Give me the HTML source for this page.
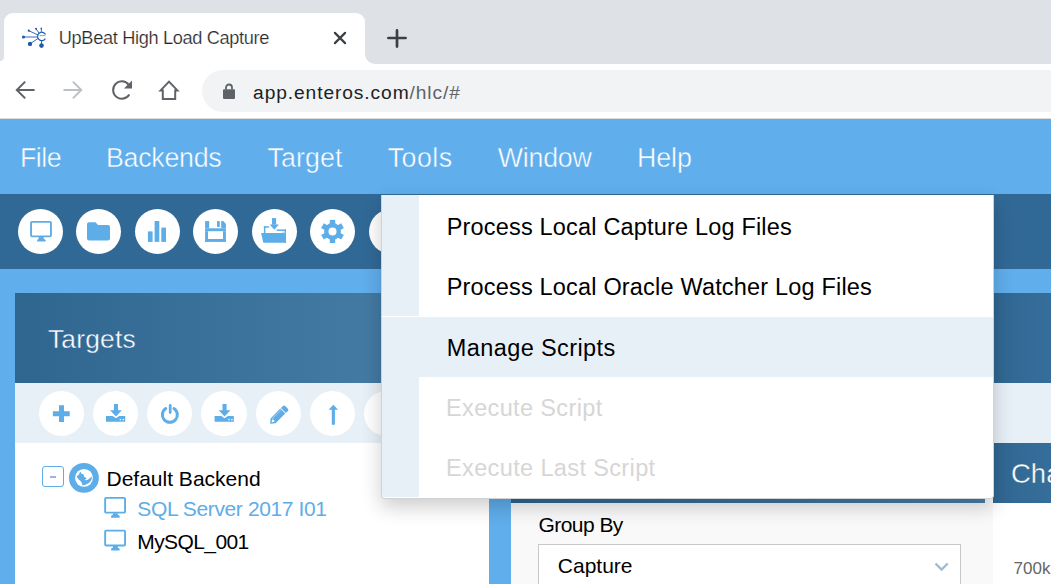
<!DOCTYPE html>
<html><head><meta charset="utf-8">
<style>
*{margin:0;padding:0;box-sizing:border-box}
html,body{width:1051px;height:584px;overflow:hidden;background:#60aeec;font-family:"Liberation Sans",sans-serif}
.a{position:absolute}
.t{position:absolute;line-height:1;white-space:nowrap}
.cb{width:45.3px;height:45.3px;border-radius:50%;background:#fff}
.cw{width:45.6px;height:45.6px;border-radius:50%;background:#fff}
</style></head><body>
<!-- tab strip -->
<div class="a" style="left:0;top:0;width:1051px;height:64px;background:#dee1e6"></div>
<div class="a" style="left:0;top:54px;width:1051px;height:10px;background:#fff"></div>
<div class="a" style="left:0;top:0;width:4px;height:61px;background:#dee1e6;border-bottom-right-radius:5px"></div>
<div class="a" style="left:365px;top:0;width:686px;height:64px;background:#dee1e6;border-bottom-left-radius:10px"></div>
<div class="a" style="left:4px;top:13px;width:361px;height:51px;background:#fff;border-radius:9px 9px 0 0"></div>
<!-- favicon -->
<svg class="a" style="left:18px;top:24px" width="32" height="28" viewBox="18 24 32 28">
<g stroke="#1f5aae" stroke-width="0.9" fill="none">
<line x1="23.5" y1="37" x2="38" y2="37"/>
<line x1="28.8" y1="30.7" x2="38" y2="35"/>
<line x1="36" y1="28.8" x2="39" y2="33"/>
<line x1="41.3" y1="28.4" x2="41.3" y2="32"/>
<line x1="30" y1="43.9" x2="38" y2="38.5"/>
<line x1="41.5" y1="45.6" x2="41.5" y2="40"/>
<path d="M45.6 34.6 A4.2 4.2 0 1 0 45.4 38.6" stroke-width="1.15"/>
<line x1="39.5" y1="35.6" x2="45.3" y2="35.6" stroke-width="0.9" opacity="0.6"/>
</g>
<g fill="#1f5aae">
<circle cx="23.5" cy="37" r="1.6"/><circle cx="28.8" cy="30.7" r="1.1"/><circle cx="36" cy="28.8" r="1"/><circle cx="41.3" cy="28.4" r="0.8"/>
<circle cx="30" cy="43.9" r="2.2"/><circle cx="41.5" cy="45.6" r="2.3"/>
</g>
</svg>
<div class="t" style="left:58.8px;top:28.5px;font-size:18.2px;letter-spacing:-0.34px;color:#26282b;-webkit-text-stroke:0.22px #fff">UpBeat High Load Capture</div>
<svg class="a" style="left:330px;top:28px" width="20" height="20" viewBox="0 0 20 20"><path d="M4.9 4.9L15.1 15.1M15.1 4.9L4.9 15.1" stroke="#3c4043" stroke-width="2.2" stroke-linecap="round"/></svg>
<svg class="a" style="left:386px;top:27px" width="22" height="22" viewBox="0 0 22 22"><path d="M11 3.4V19.6M2.4 11H19.6" stroke="#3c4043" stroke-width="2.7" stroke-linecap="round"/></svg>

<!-- toolbar -->
<div class="a" style="left:0;top:64px;width:1051px;height:55px;background:#fff"></div>
<div class="a" style="left:0;top:118px;width:1051px;height:1px;background:#e2dcdc"></div>
<svg class="a" style="left:10px;top:75px" width="30" height="30" viewBox="0 0 30 30"><path d="M24.6 15H6.8M15.2 6.6L6.8 15L15.2 23.4" stroke="#5f6368" stroke-width="2" fill="none"/></svg>
<svg class="a" style="left:58px;top:75px" width="30" height="30" viewBox="0 0 30 30"><path d="M5.5 15H23.3M14.9 6.6L23.3 15L14.9 23.4" stroke="#bdc1c6" stroke-width="2" fill="none"/></svg>
<svg class="a" style="left:106px;top:75px" width="30" height="30" viewBox="0 0 30 30"><path d="M23.3 19.5A8.7 8.7 0 1 1 22.5 9.5" stroke="#5f6368" stroke-width="2" fill="none"/><path d="M26 5.5V13.5H18Z" fill="#5f6368"/></svg>
<svg class="a" style="left:154px;top:75px" width="30" height="30" viewBox="0 0 30 30"><path d="M15 6.6L23.4 15.4H21.2V24H8.8V15.4H6.6Z" stroke="#5f6368" stroke-width="2" fill="none" stroke-linejoin="miter"/></svg>
<div class="a" style="left:202px;top:70px;width:900px;height:42px;background:#f1f3f4;border-radius:21px"></div>
<svg class="a" style="left:220px;top:82px" width="18" height="18" viewBox="0 0 18 18"><path d="M6 7.5V5.5A3 3 0 0 1 12 5.5V7.5" stroke="#5f6368" stroke-width="1.8" fill="none"/><rect x="3" y="7.2" width="12" height="9.8" rx="1" fill="#5f6368"/></svg>
<div class="t" style="left:253.1px;top:82.9px;font-size:19.2px;letter-spacing:0.9px;color:#202124">app.enteros.com<span style="color:#5f6368">/hlc/#</span></div>

<!-- app menubar -->
<div class="a" style="left:0;top:119px;width:1051px;height:75px;background:#60aeec"></div>
<div class="t mn" style="left:20px;top:144.7px;font-size:26.8px;letter-spacing:-0.5px;color:#fff;-webkit-text-stroke:0.45px #60aeec">File</div>
<div class="t mn" style="left:106px;top:144.7px;font-size:26.8px;letter-spacing:-0.28px;color:#fff;-webkit-text-stroke:0.45px #60aeec">Backends</div>
<div class="t mn" style="left:267.4px;top:144.7px;font-size:26.8px;letter-spacing:0.13px;color:#fff;-webkit-text-stroke:0.45px #60aeec">Target</div>
<div class="t mn" style="left:387.7px;top:144.7px;font-size:26.8px;letter-spacing:0.45px;color:#fff;-webkit-text-stroke:0.45px #60aeec">Tools</div>
<div class="t mn" style="left:497.8px;top:144.7px;font-size:26.8px;letter-spacing:-0.27px;color:#fff;-webkit-text-stroke:0.45px #60aeec">Window</div>
<div class="t mn" style="left:637px;top:144.7px;font-size:26.8px;letter-spacing:-0.1px;color:#fff;-webkit-text-stroke:0.45px #60aeec">Help</div>

<!-- dark toolbar -->
<div class="a" style="left:0;top:194px;width:1051px;height:74.6px;background:#316996"></div>
<!-- dark toolbar circles -->
<div class="a cb" style="left:18px;top:208.8px"></div>
<div class="a cb" style="left:76px;top:208.8px"></div>
<div class="a cb" style="left:135px;top:208.8px"></div>
<div class="a cb" style="left:193px;top:208.8px"></div>
<div class="a cb" style="left:252px;top:208.8px"></div>
<div class="a cb" style="left:310px;top:208.8px"></div>
<div class="a cb" style="left:368.6px;top:208.8px"></div>
<svg class="a" style="left:0;top:194px" width="381" height="74" viewBox="0 194 381 74">
<g fill="#5dade8">
<!-- monitor -->
<rect x="31.05" y="221.85" width="19.9" height="14.5" rx="1" fill="none" stroke="#5dade8" stroke-width="1.9"/>
<rect x="38.6" y="237" width="5.1" height="2.4"/>
<path d="M38.2 238.9H44.4L45.6 240.2V241.5H37V240.2Z"/>
<!-- folder -->
<path d="M89 222.3H95.5L98 225H108A2 2 0 0 1 110 227V238.5A2 2 0 0 1 108 240.5H89A2 2 0 0 1 87 238.5V224.3A2 2 0 0 1 89 222.3Z"/>
<!-- bars -->
<rect x="147.9" y="231.4" width="4.7" height="10.5"/>
<rect x="154.6" y="221" width="4.7" height="20.9"/>
<rect x="161.3" y="227.6" width="4.7" height="14.3"/>
<!-- floppy -->
<rect x="205.1" y="221.1" width="4.1" height="7.2"/>
<path d="M221.2 221.1H223.3L225.9 224V228.3H221.2Z"/>
<rect x="205.1" y="228.3" width="20.8" height="2.9"/>
<rect x="205.1" y="231.2" width="2.9" height="10.7"/>
<rect x="223" y="231.2" width="2.9" height="10.7"/>
<rect x="205.1" y="239" width="20.8" height="2.9"/>
<rect x="217" y="221.1" width="2.8" height="5.8"/>
<!-- open folder w arrow -->
<rect x="272" y="218.1" width="4.1" height="6.6"/>
<path d="M269.7 224.5H279L274.3 229.7Z"/>
<rect x="263.9" y="226.2" width="1.5" height="7"/>
<path d="M263.9 226.2H269.4L268.6 227.7H263.9Z"/>
<rect x="276.7" y="229.4" width="9.3" height="1.5"/>
<rect x="284.5" y="229.4" width="1.5" height="13.4"/>
<rect x="282.6" y="231.6" width="1" height="2.4" opacity="0.6"/>
<path d="M261.1 232.9H284.2L286 235V242.8H263.3Z"/>
<!-- gear -->
<circle cx="332.5" cy="231.45" r="8.4"/>
<rect x="329.80" y="219.90" width="5.4" height="5" transform="rotate(0 332.5 231.45)"/><rect x="329.80" y="219.90" width="5.4" height="5" transform="rotate(60 332.5 231.45)"/><rect x="329.80" y="219.90" width="5.4" height="5" transform="rotate(120 332.5 231.45)"/><rect x="329.80" y="219.90" width="5.4" height="5" transform="rotate(180 332.5 231.45)"/><rect x="329.80" y="219.90" width="5.4" height="5" transform="rotate(240 332.5 231.45)"/><rect x="329.80" y="219.90" width="5.4" height="5" transform="rotate(300 332.5 231.45)"/>
<circle cx="332.5" cy="231.45" r="4" fill="#fff"/>
</g>
</svg>
<div class="a" style="left:0;top:268.6px;width:1051px;height:24.4px;background:#60aeec"></div>

<!-- Targets panel -->
<div class="a" style="left:15px;top:293px;width:474px;height:90px;background:linear-gradient(90deg,#2f6690,#4a80aa)"></div>
<div class="t" style="left:47.9px;top:325.6px;font-size:26.4px;letter-spacing:0.2px;color:#fff;-webkit-text-stroke:0.4px #33699a">Targets</div>
<div class="a" style="left:15px;top:383px;width:474px;height:60px;background:#e8f0f7"></div>
<div class="a" style="left:15px;top:443px;width:474px;height:141px;background:#fff"></div>
<div class="a cw" style="left:38.8px;top:390.6px"></div>
<div class="a cw" style="left:92.9px;top:390.6px"></div>
<div class="a cw" style="left:146.8px;top:390.6px"></div>
<div class="a cw" style="left:201.3px;top:390.6px"></div>
<div class="a cw" style="left:255.6px;top:390.6px"></div>
<div class="a cw" style="left:309.9px;top:390.6px"></div>
<div class="a cw" style="left:364.2px;top:390.6px"></div>
<svg class="a" style="left:15px;top:383px" width="374" height="60" viewBox="15 383 374 60">
<g fill="#5dade8">
<path d="M59 405.3H64V411.2H69.7V416.2H64V422H59V416.2H52.9V411.2H59Z"/>
<!-- download -->
<g transform="translate(0 0)">
<path d="M113.9 404H118V410.2H121.8L115.95 416.6L110.1 410.2H113.9Z"/>
<path fill-rule="evenodd" d="M106 416.1H112.6L115.95 418.2L119.3 416.1H125.2V421.8H106ZM119.7 418.9V420.3H121.1V418.9ZM122.6 418.9V420.3H124V418.9Z"/>
</g>
<g transform="translate(108.6 0)">
<path d="M113.9 404H118V410.2H121.8L115.95 416.6L110.1 410.2H113.9Z"/>
<path fill-rule="evenodd" d="M106 416.1H112.6L115.95 418.2L119.3 416.1H125.2V421.8H106ZM119.7 418.9V420.3H121.1V418.9ZM122.6 418.9V420.3H124V418.9Z"/>
</g>
<!-- power -->
<path d="M173.93 408.56A7.5 7.5 0 1 1 165.77 408.56" fill="none" stroke="#5dade8" stroke-width="3" stroke-linecap="round"/>
<path d="M170.2 405.4V412.6" stroke="#5dade8" stroke-width="2.7" stroke-linecap="round"/>
<!-- pencil -->
<g transform="rotate(-45 279.2 414.7)">
<path d="M266.5 414.7L270.5 411.2H284.3V418.2H270.5Z"/>
<path d="M285.2 411.2H288A1.6 1.6 0 0 1 289.6 412.8V416.6A1.6 1.6 0 0 1 288 418.2H285.2Z"/>
<rect x="271" y="412.3" width="12.8" height="0.6" fill="#fff" opacity="0.5"/>
<path d="M268.6 414.7L270.2 413.4H271.5V416H270.2Z" fill="#fff"/>
</g>
<!-- up arrow -->
<path d="M333.3 404.8L338.1 409.7H334.9V424.8H331.8V409.7H328.6Z"/>
</g>
</svg>
<!-- tree -->
<div class="a" style="left:42.2px;top:466.1px;width:21.4px;height:21.4px;border:1px solid #5dade8;border-radius:3px"></div>
<div class="a" style="left:50px;top:476.2px;width:5.5px;height:1.4px;background:#9fb0e6"></div>
<svg class="a" style="left:68px;top:462px" width="32" height="32" viewBox="68 462 32 32">
<defs><clipPath id="gc"><circle cx="84" cy="477.85" r="7.9"/></clipPath></defs>
<circle cx="83.9" cy="477.9" r="14.95" fill="#5dade8"/>
<circle cx="84" cy="477.85" r="8.95" fill="#fff"/>
<polygon clip-path="url(#gc)" fill="#5dade8" points="80.53,471.52 81.10,473.21 82.04,473.97 83.17,474.34 83.92,475.10 83.92,476.42 85.43,477.55 86.56,478.30 86.18,479.05 84.86,479.62 85.43,480.37 87.31,479.99 89.20,478.86 90.51,477.73 91.46,476.42 92.21,477.17 91.83,479.43 89.95,482.07 88.07,483.57 85.43,484.70 82.42,485.46 82.04,483.57 81.29,482.07 80.53,480.94 78.65,479.43 77.90,478.30 76.77,477.55 76.95,476.04 78.27,475.29 79.40,473.78 79.78,472.27"/>
</svg>
<div class="t" style="left:106.5px;top:467.9px;font-size:21px;color:#000">Default Backend</div>
<svg class="a" style="left:100px;top:494px" width="30" height="27" viewBox="100 494 30 27">
<rect x="105.15" y="497.85" width="19.9" height="14.8" rx="1" fill="none" stroke="#5dade8" stroke-width="1.9"/>
<path d="M113 513.30H117.6L117.9 515.30H112.7Z" fill="#5dade8"/>
<path d="M111.9 515.10H118.8L119.6 516.20V517.70H111.1V516.20Z" fill="#5dade8"/>
</svg>
<svg class="a" style="left:100px;top:527px" width="30" height="27" viewBox="100 527 30 27">
<rect x="105.15" y="530.65" width="19.9" height="14.8" rx="1" fill="none" stroke="#5dade8" stroke-width="1.9"/>
<path d="M113 546.10H117.6L117.9 548.10H112.7Z" fill="#5dade8"/>
<path d="M111.9 547.90H118.8L119.6 549.00V550.50H111.1V549.00Z" fill="#5dade8"/>
</svg>
<div class="t" style="left:137.3px;top:498.2px;font-size:21px;letter-spacing:-0.38px;color:#5dade8">SQL Server 2017 I01</div>
<div class="t" style="left:137.3px;top:531.2px;font-size:21px;letter-spacing:-0.6px;color:#000">MySQL_001</div>

<!-- middle panel -->
<div class="a" style="left:511px;top:293px;width:474px;height:90px;background:linear-gradient(90deg,#2f6690,#4a80aa)"></div>
<div class="a" style="left:511px;top:383px;width:474px;height:60px;background:#e8f0f7"></div>
<div class="a" style="left:511px;top:443px;width:474px;height:60px;background:linear-gradient(90deg,#2f6690,#4a80aa)"></div>
<div class="a" style="left:985px;top:443px;width:8px;height:60px;background:#f9f9f9"></div>
<div class="a" style="left:511px;top:502.5px;width:482px;height:82px;background:#f9f9f9"></div>
<div class="t" style="left:538.5px;top:514.4px;font-size:21px;letter-spacing:-0.55px;color:#000">Group By</div>
<div class="a" style="left:538.4px;top:544px;width:423px;height:50px;background:#fff;border:1px solid #c8c8c8"></div>
<div class="t" style="left:557.8px;top:555.2px;font-size:21px;color:#000">Capture</div>
<svg class="a" style="left:930px;top:558px" width="24" height="16" viewBox="930 558 24 16"><path d="M935.5 563.5L941.6 569.5L947.7 563.5" fill="none" stroke="#9bbcd6" stroke-width="2.4"/></svg>

<!-- right panel -->
<div class="a" style="left:993px;top:293px;width:58px;height:90px;background:linear-gradient(90deg,#306791,#366e9b)"></div>
<div class="a" style="left:993px;top:383px;width:58px;height:60px;background:#e8f0f7"></div>
<div class="a" style="left:993px;top:443px;width:58px;height:59.6px;background:linear-gradient(90deg,#306791,#366e9b)"></div>
<div class="a" style="left:993px;top:502.6px;width:58px;height:82px;background:#fff"></div>
<div class="t" style="left:1011px;top:460px;font-size:27.5px;color:#fff;-webkit-text-stroke:0.4px #326892">Cha</div>
<div class="t" style="left:1013.6px;top:559.8px;font-size:17px;color:#666">700k</div>

<!-- dropdown -->
<div class="a" style="left:380.5px;top:194.5px;width:613.5px;height:304px;background:#fff;border:1px solid #cfd3d6;border-top:none;border-radius:0 0 4px 4px;box-shadow:0 8px 20px rgba(0,0,0,.2);overflow:hidden">
 <div class="a" style="left:0;top:0;width:37.5px;height:302px;background:#e8f0f7"></div>
 <div class="a" style="left:0;top:121px;width:612px;height:1px;background:#fff"></div>
 <div class="a" style="left:0;top:122px;width:612px;height:60px;background:#e8f0f7"></div>
</div>
<div class="t dd" style="left:446.75px;top:216px;font-size:23.5px;letter-spacing:0.18px;color:#000">Process Local Capture Log Files</div>
<div class="t dd" style="left:446.75px;top:276px;font-size:23.5px;letter-spacing:0.18px;color:#000">Process Local Oracle Watcher Log Files</div>
<div class="t dd" style="left:446.8px;top:337px;font-size:23.5px;letter-spacing:0.4px;color:#000">Manage Scripts</div>
<div class="t dd" style="left:446px;top:397.2px;font-size:23.5px;letter-spacing:0.36px;color:#d6d6d6">Execute Script</div>
<div class="t dd" style="left:446px;top:456.9px;font-size:23.5px;letter-spacing:0.37px;color:#d6d6d6">Execute Last Script</div>

</body></html>
